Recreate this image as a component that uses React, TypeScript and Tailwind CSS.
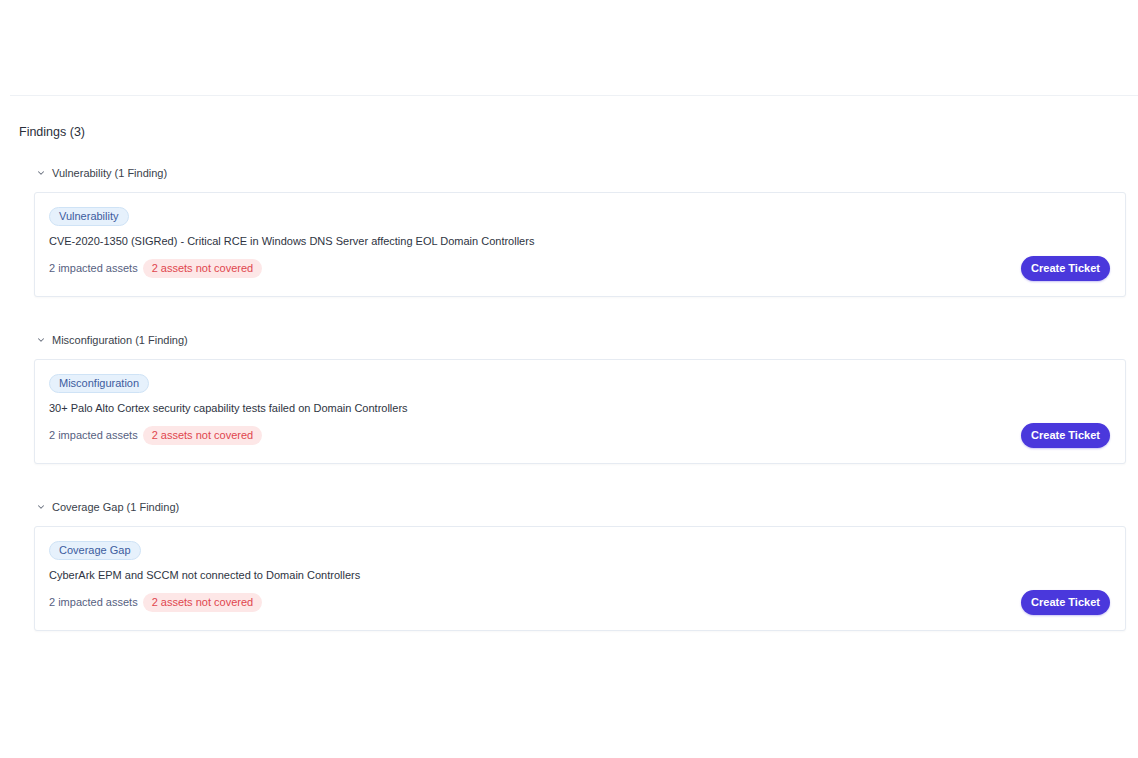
import { ChevronDown } from 'lucide-react';

interface Finding {
  group: string;
  badge: string;
  title: string;
}

const findings: Finding[] = [
  {
    group: 'Vulnerability (1 Finding)',
    badge: 'Vulnerability',
    title: 'CVE-2020-1350 (SIGRed) - Critical RCE in Windows DNS Server affecting EOL Domain Controllers',
  },
  {
    group: 'Misconfiguration (1 Finding)',
    badge: 'Misconfiguration',
    title: '30+ Palo Alto Cortex security capability tests failed on Domain Controllers',
  },
  {
    group: 'Coverage Gap (1 Finding)',
    badge: 'Coverage Gap',
    title: 'CyberArk EPM and SCCM not connected to Domain Controllers',
  },
];

function FindingGroup({ f }: { f: Finding }) {
  return (
    <div className="pl-[15px]">
      {/* Group header */}
      <div className="flex h-4 items-center gap-[6px] pl-[2px] text-[11px] text-[#3a3f4b]">
        <ChevronDown className="h-[10px] w-[10px] text-[#6b7280]" strokeWidth={2.5} />
        <span>{f.group}</span>
      </div>

      {/* Card */}
      <div className="mt-[11px] flex h-[105px] items-end justify-between rounded-[3px] border border-[#e6ebf2] bg-white pb-[15px] pl-[14px] pr-[15px] pt-[14px] shadow-[0_1px_2px_rgba(15,23,42,0.03)]">
        <div className="flex h-full flex-col">
          <span className="inline-flex h-[19px] w-fit items-center rounded-full border border-[#cfe3f6] bg-[#e6f1fc] px-[9px] text-[11px] text-[#3d5c9e]">
            {f.badge}
          </span>
          <p className="mt-[7px] text-[11px] leading-4 text-[#2e3442]">{f.title}</p>
          <div className="mt-[10px] flex items-center gap-[5px] text-[11px]">
            <span className="text-[#56617f]">2 impacted assets</span>
            <span className="inline-flex h-[19px] items-center rounded-full bg-[#fde7e7] px-[9px] text-[#e0464e]">
              2 assets not covered
            </span>
          </div>
        </div>
        <button className="h-[25px] w-[89px] rounded-full bg-[#4a38dc] text-[11px] font-bold text-white shadow-[0_1px_2px_rgba(74,56,220,0.3)]">
          Create Ticket
        </button>
      </div>
    </div>
  );
}

export default function App() {
  return (
    <div
      className="h-[758px] w-full bg-white"
      style={{ fontFamily: '"Liberation Sans", Arial, sans-serif' }}
    >
      <div className="h-[95px]" />
      <div className="ml-[10px] border-t border-[#eef1f5]" />

      <div className="pl-[19px] pr-[12px]">
        <h2 className="mt-[28px] h-4 text-[12.5px] leading-4 text-[#2a2f3a]">Findings (3)</h2>

        <div className="mt-[25px] flex flex-col gap-[35px]">
          {findings.map((f) => (
            <FindingGroup key={f.badge} f={f} />
          ))}
        </div>
      </div>
    </div>
  );
}
